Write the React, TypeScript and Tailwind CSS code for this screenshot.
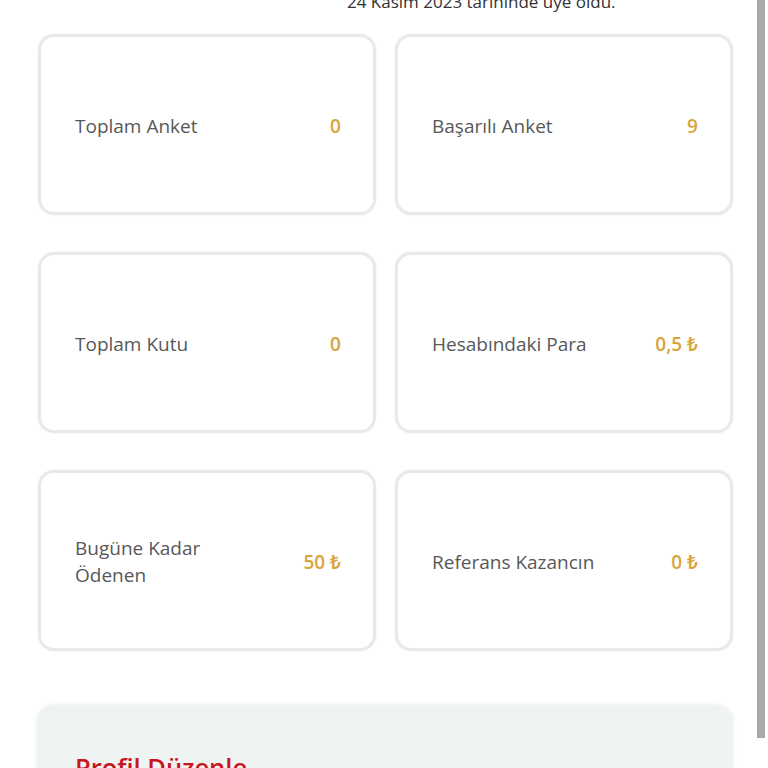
import React from "react";

const stats = [
  { label: "Toplam Anket", value: "0" },
  { label: "Başarılı Anket", value: "9" },
  { label: "Toplam Kutu", value: "0" },
  { label: "Hesabındaki Para", value: "0,5 ₺" },
  { label: "Bugüne Kadar Ödenen", value: "50 ₺" },
  { label: "Referans Kazancın", value: "0 ₺" },
];

export default function App() {
  return (
    <div
      className="relative h-[768px] w-[768px] overflow-hidden bg-white"
      style={{ fontFamily: '"Open Sans", "Noto Sans", sans-serif' }}
    >
      <div className="-mt-[10px] pl-[347px] text-[17px] leading-[24px] text-[#333]">
        24 Kasım 2023 tarihinde üye oldu.
      </div>

      <div className="mt-[20px] grid grid-cols-[338px_338px] gap-x-[19px] gap-y-[37px] pl-[38px]">
        {stats.map((s) => (
          <div
            key={s.label}
            className="flex h-[181px] items-center rounded-[16px] border-[3px] border-[#e9e9e9] bg-white pl-[34px] pr-[32px] pt-[3px] shadow-[0_0_2px_rgba(0,0,0,0.08)]"
          >
            <div className="w-2/3 text-[19px] leading-[27px] text-[#585858]">{s.label}</div>
            <div className="w-1/3 text-right text-[19px] font-semibold leading-[27px] text-[#d9a43a]">
              {s.value}
            </div>
          </div>
        ))}
      </div>

      <div className="ml-[37px] mt-[54px] h-[200px] w-[696px] rounded-[16px] bg-[#eff3f2] px-[38px] pt-[45px] shadow-[0_0_4px_rgba(0,0,0,0.08)]">
        <h2 className="text-[25.5px] font-semibold leading-[34px] text-[#c8161d]">Profil Düzenle</h2>
      </div>

      <div className="absolute right-[3px] top-0 h-[738px] w-[8px] bg-[#a9a9a9]" />
    </div>
  );
}
